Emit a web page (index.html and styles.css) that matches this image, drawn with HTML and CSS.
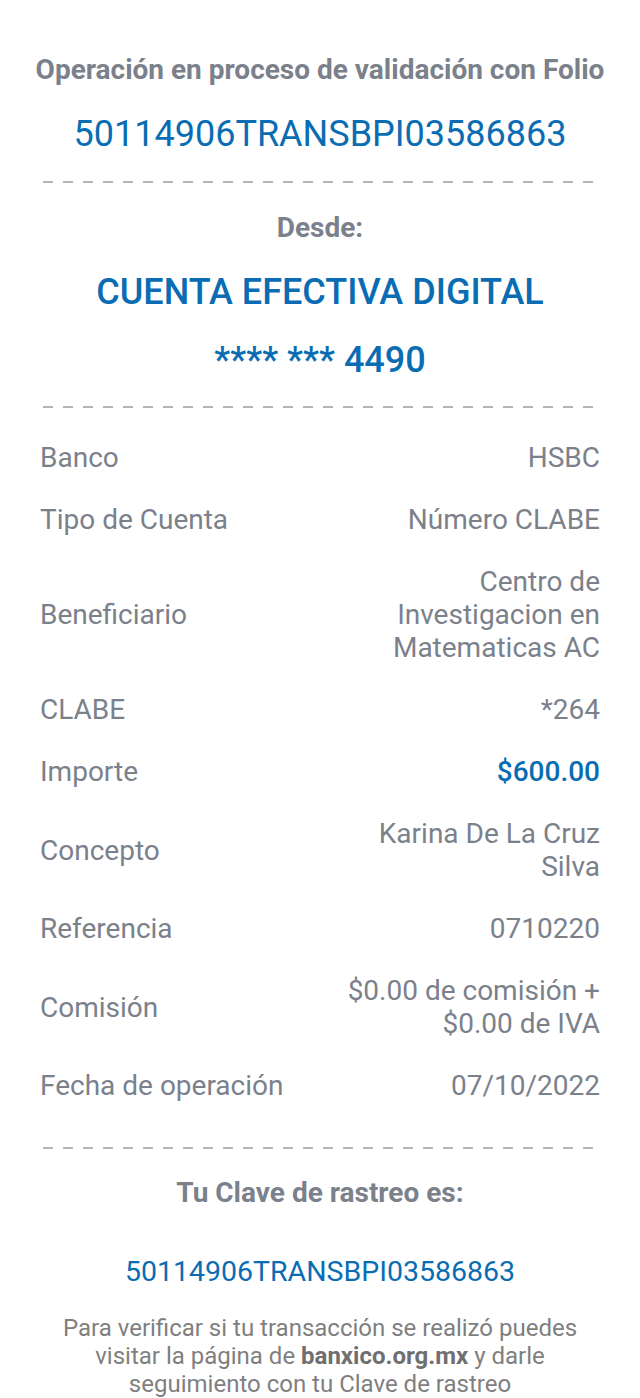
FILE: index.html
```html
<!DOCTYPE html>
<html lang="es">
<head>
<meta charset="utf-8">
<title>Operación en proceso</title>
<link rel="stylesheet" href="styles.css">
</head>
<body>
<main class="receipt">
  <h1 class="title">Operación en proceso de validación con Folio</h1>
  <div class="folio">50114906TRANSBPI03586863</div>
  <div class="divider"></div>
  <div class="desde">Desde:</div>
  <div class="account">CUENTA EFECTIVA DIGITAL</div>
  <div class="masked">**** *** 4490</div>
  <div class="divider divider-2"></div>
  <section class="rows">
    <div class="row"><div class="label">Banco</div><div class="value">HSBC</div></div>
    <div class="row"><div class="label">Tipo de Cuenta</div><div class="value">Número CLABE</div></div>
    <div class="row"><div class="label">Beneficiario</div><div class="value">Centro de Investigacion en Matematicas AC</div></div>
    <div class="row"><div class="label">CLABE</div><div class="value">*264</div></div>
    <div class="row"><div class="label">Importe</div><div class="value value-amount">$600.00</div></div>
    <div class="row"><div class="label">Concepto</div><div class="value">Karina De La Cruz Silva</div></div>
    <div class="row"><div class="label">Referencia</div><div class="value">0710220</div></div>
    <div class="row"><div class="label">Comisión</div><div class="value">$0.00 de comisión + $0.00 de IVA</div></div>
    <div class="row"><div class="label">Fecha de operación</div><div class="value">07/10/2022</div></div>
  </section>
  <div class="divider divider-3"></div>
  <div class="clave-title">Tu Clave de rastreo es:</div>
  <div class="clave">50114906TRANSBPI03586863</div>
  <p class="note">Para verificar si tu transacción se realizó puedes visitar la página de <b>banxico.org.mx</b> y darle seguimiento con tu Clave de rastreo</p>
</main>
</body>
</html>
```

FILE: styles.css
```css
html, body {
  margin: 0;
  padding: 0;
  background: #ffffff;
}
body {
  font-family: Roboto, "Noto Sans", sans-serif;
  color: #7b818b;
}
.receipt {
  width: 640px;
  display: flex;
  flex-direction: column;
}
.title {
  margin: 50px 0 0;
  font-size: 28px;
  font-weight: 700;
  line-height: 40px;
  text-align: center;
  color: #7b818b;
  white-space: nowrap;
}
.folio {
  margin-top: 22px;
  font-size: 36px;
  line-height: 44px;
  text-align: center;
  color: #0a6db3;
}
.divider {
  margin: 25px 42px 0 43px;
  height: 2px;
  background: repeating-linear-gradient(to right, #b4b4b4 0 10px, transparent 10px 20px);
}
.desde {
  margin-top: 27px;
  font-size: 28px;
  font-weight: 700;
  line-height: 36px;
  text-align: center;
}
.account {
  margin-top: 24px;
  font-size: 36px;
  font-weight: 500;
  line-height: 44px;
  text-align: center;
  color: #0a6db3;
}
.masked {
  margin-top: 24px;
  font-size: 36px;
  font-weight: 500;
  line-height: 44px;
  text-align: center;
  color: #0a6db3;
}
.divider-2 {
  margin-top: 24px;
}
.rows {
  margin: 19px 40px 0;
  display: flex;
  flex-direction: column;
}
.row {
  display: flex;
  align-items: center;
  justify-content: space-between;
  padding: 14px 0 15px;
  font-size: 28px;
  line-height: 33px;
}
.label {
  flex: 1;
}
.value {
  max-width: 280px;
  text-align: right;
}
.value-amount {
  color: #0a6db3;
  font-weight: 500;
}
.divider-3 {
  margin-top: 30px;
}
.clave-title {
  margin-top: 26px;
  font-size: 28px;
  font-weight: 700;
  line-height: 36px;
  text-align: center;
}
.clave {
  margin-top: 43px;
  font-size: 28.5px;
  line-height: 36px;
  text-align: center;
  color: #0a6db3;
}
.note {
  margin: 24px 56px 0;
  font-size: 24px;
  line-height: 28.2px;
  text-align: center;
  color: #7f7f7f;
}
.note b {
  font-weight: 700;
  color: #6f6f6f;
}
```
